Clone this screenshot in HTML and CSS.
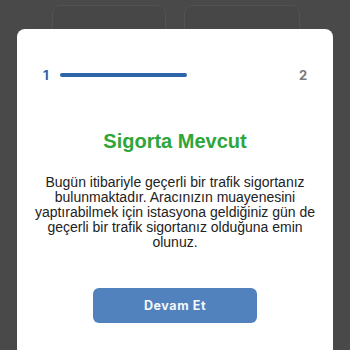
FILE: index.html
```html
<!DOCTYPE html>
<html lang="tr">
<head>
<meta charset="utf-8">
<link rel="stylesheet" href="styles.css">
</head>
<body>
<div class="bg">
  <div class="bg-card"></div>
  <div class="bg-card"></div>
</div>
<div class="modal">
  <div class="steps">
    <span class="step active">1</span>
    <div class="track"><div class="fill"></div></div>
    <span class="step">2</span>
  </div>
  <h1 class="title">Sigorta Mevcut</h1>
  <p class="text">Bugün itibariyle geçerli bir trafik sigortanız bulunmaktadır. Aracınızın muayenesini yaptırabilmek için istasyona geldiğiniz gün de geçerli bir trafik sigortanız olduğuna emin olunuz.</p>
  <button class="btn">Devam Et</button>
</div>
</body>
</html>
```
FILE: styles.css
```css
html, body {
  margin: 0;
  padding: 0;
  width: 350px;
  height: 350px;
  overflow: hidden;
  background: #494949;
  font-family: "Liberation Sans", Arial, sans-serif;
}
.bg {
  display: flex;
  gap: 18px;
  padding: 5px 0 0 52px;
}
.bg-card {
  width: 112px;
  height: 60px;
  border: 1px solid #525252;
  border-radius: 8px;
  background: #474747;
}
.bg-card + .bg-card {
  width: 114px;
}
.modal {
  position: absolute;
  left: 17px;
  top: 29px;
  width: 316px;
  height: 321px;
  overflow: hidden;
  background: #ffffff;
  border-radius: 8px 8px 0 0;
  box-sizing: border-box;
  padding: 38px 26px 0 26px;
  display: flex;
  flex-direction: column;
  align-items: center;
}
.steps {
  align-self: stretch;
  display: flex;
  align-items: center;
  height: 16px;
}
.step {
  font-family: Inter, "Liberation Sans", sans-serif;
  font-weight: 700;
  font-size: 13px;
  color: #7a7a7a;
  width: 8px;
}
.step.active {
  color: #2e64a8;
}
.track {
  flex: 1;
  margin: 0 0 0 9px;
}
.fill {
  width: 127px;
  height: 4px;
  border-radius: 2px;
  background: #2e64a8;
}
.title {
  margin: 46px 0 0 0;
  font-size: 20px;
  line-height: 24px;
  font-weight: 700;
  color: #2fa53a;
}
.text {
  margin: 22px -18px 0 -18px;
  font-size: 14px;
  line-height: 15px;
  color: #222222;
  text-align: center;
}
.btn {
  margin-top: 38px;
  flex: none;
  width: 164px;
  height: 35px;
  border: none;
  border-radius: 6px;
  background: #5182be;
  color: #f4f7fb;
  font-family: Inter, Roboto, sans-serif;
  font-weight: 700;
  font-size: 12.5px;
  letter-spacing: 0.6px;
}
```
